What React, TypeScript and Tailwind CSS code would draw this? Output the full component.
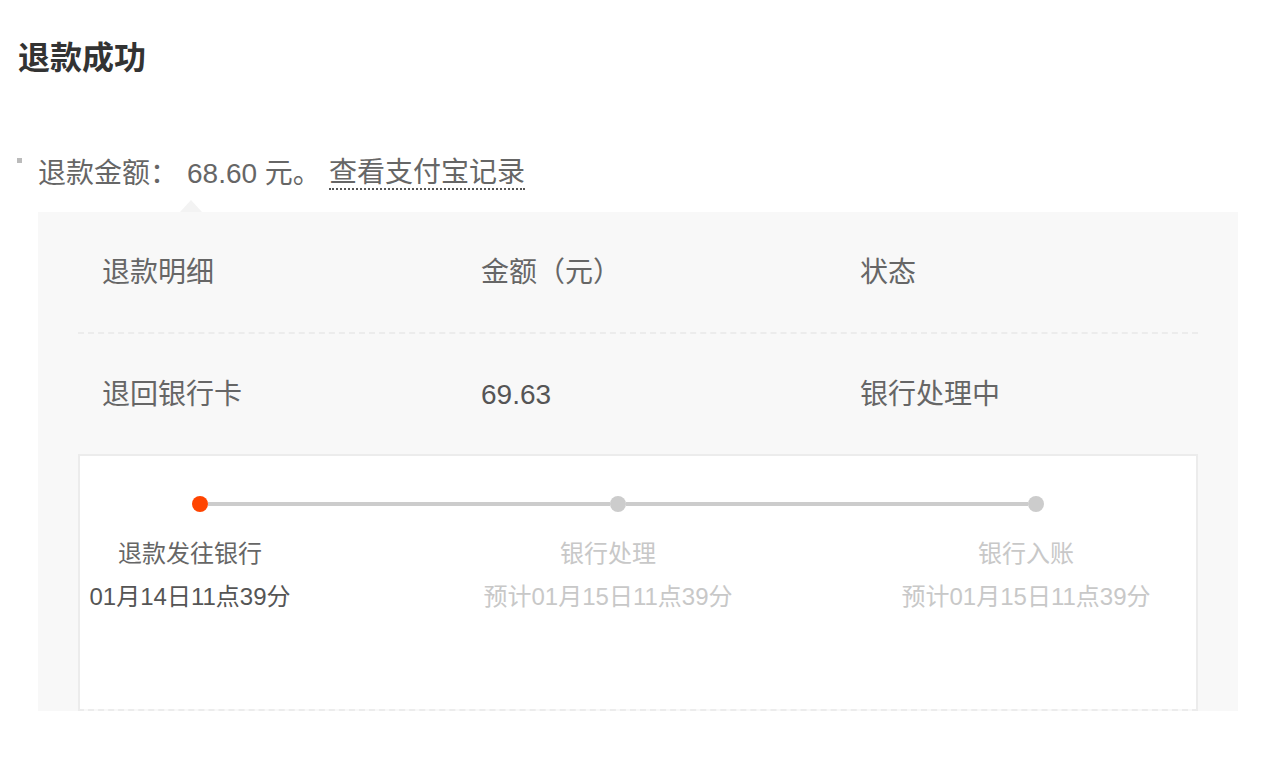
const font = { fontFamily: '"Liberation Sans", "Noto Sans CJK SC", sans-serif' };

type Step = { label: string; time: string; done: boolean };

const steps: Step[] = [
  { label: '退款发往银行', time: '01月14日11点39分', done: true },
  { label: '银行处理', time: '预计01月15日11点39分', done: false },
  { label: '银行入账', time: '预计01月15日11点39分', done: false },
];

export default function App() {
  return (
    <div className="min-h-[762px] bg-white pt-[38px]" style={font}>
      <h1 className="pl-[18px] text-[32px] leading-[40px] font-semibold text-[#333]">退款成功</h1>

      <div className="mt-[76px] flex items-start">
        <span className="ml-[17px] mt-[4px] h-[5px] w-[5px] bg-[#bbb]" />
        <div className="ml-[16px] flex h-[40px] items-center text-[28px] text-[#666]">
          <span>退款金额：</span>
          <span className="ml-[9px]">68.60 元。</span>
          <span className="ml-[8px] inline-block border-b-2 border-dotted border-[#555] leading-[30px]">
            查看支付宝记录
          </span>
        </div>
      </div>

      <div className="relative mx-[38px] mt-[18px] w-[1200px] bg-[#f8f8f8] px-[40px]">
        <span className="absolute left-[142px] top-[-12px] h-0 w-0 border-x-[11px] border-b-[12px] border-x-transparent border-b-[#f3f3f3]" />

        <div className="flex h-[122px] items-center border-b-2 border-dashed border-[#ececec] pl-[24px] pt-[2px] text-[28px] text-[#666]">
          <div className="w-[379px]">退款明细</div>
          <div className="w-[379px]">金额（元）</div>
          <div>状态</div>
        </div>
        <div className="flex h-[120px] items-center pl-[24px] pt-[2px] text-[28px] text-[#666]">
          <div className="w-[379px]">退回银行卡</div>
          <div className="w-[379px] text-[#555]">69.63</div>
          <div>银行处理中</div>
        </div>

        <div className="h-[255px] border-2 border-b-0 border-[#ececec] bg-white pt-[40px]">
          <div className="ml-[112px] flex h-[16px] items-center">
            <span className="h-[16px] w-[16px] rounded-full bg-[#ff4400]" />
            <span className="h-[4px] w-[402px] bg-[#cccccc]" />
            <span className="h-[16px] w-[16px] rounded-full bg-[#cccccc]" />
            <span className="h-[4px] w-[402px] bg-[#cccccc]" />
            <span className="h-[16px] w-[16px] rounded-full bg-[#cccccc]" />
          </div>
          <div className="mt-[22px] flex gap-[198px]">
            {steps.map((s) => (
              <div
                key={s.label}
                className={`flex w-[220px] flex-col items-center whitespace-nowrap text-[24px] leading-[40px] ${
                  s.done ? 'text-[#666]' : 'text-[#c8c8c8]'
                }`}
              >
                <div>{s.label}</div>
                <div className={`mt-[3px] ${s.done ? 'text-[#555]' : ''}`}>{s.time}</div>
              </div>
            ))}
          </div>
        </div>
        <div className="border-b-2 border-dashed border-[#ececec]" />
      </div>
    </div>
  );
}
